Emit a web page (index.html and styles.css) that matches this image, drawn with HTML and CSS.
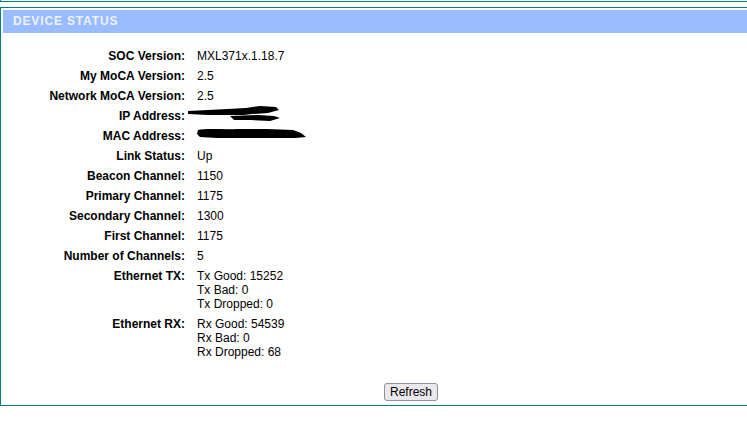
FILE: index.html
```html
<!DOCTYPE html>
<html>
<head>
<meta charset="utf-8">
<title>Device Status</title>
<link rel="stylesheet" href="styles.css">
</head>
<body>
<div class="frame">
<div class="prev-frame"></div>
<div class="panel">
  <div class="panel-title">DEVICE STATUS</div>
  <div class="status">
    <div class="row"><div class="label">SOC Version:</div><div class="value">MXL371x.1.18.7</div></div>
    <div class="row"><div class="label">My MoCA Version:</div><div class="value">2.5</div></div>
    <div class="row"><div class="label">Network MoCA Version:</div><div class="value">2.5</div></div>
    <div class="row"><div class="label">IP Address:</div><div class="value redacted">
      <svg class="scrub scrub-ip" width="96" height="16" viewBox="0 0 96 16">
        <path d="M0 5 C20 4 40 3 58 2 L72 0 L88 1 L91 4 L80 7 L64 8 L56 9 L40 9 L20 9 L0 8 Z" fill="#000"/>
        <path d="M42 10 L70 9 L86 10 L92 12 L82 15 L62 14 L46 14 Z" fill="#000"/>
      </svg>
    </div></div>
    <div class="row"><div class="label">MAC Address:</div><div class="value redacted">
      <svg class="scrub scrub-mac" width="112" height="12" viewBox="0 0 112 12">
        <path d="M1 2 C10 0 28 2 40 1 L70 1 L96 2 L104 5 L109 9 L98 10 L70 10 L40 10 L20 10 L3 9 L0 6 Z" fill="#000"/>
      </svg>
    </div></div>
    <div class="row"><div class="label">Link Status:</div><div class="value">Up</div></div>
    <div class="row"><div class="label">Beacon Channel:</div><div class="value">1150</div></div>
    <div class="row"><div class="label">Primary Channel:</div><div class="value">1175</div></div>
    <div class="row"><div class="label">Secondary Channel:</div><div class="value">1300</div></div>
    <div class="row"><div class="label">First Channel:</div><div class="value">1175</div></div>
    <div class="row"><div class="label">Number of Channels:</div><div class="value">5</div></div>
    <div class="row"><div class="label">Ethernet TX:</div><div class="value">Tx Good: 15252<br>Tx Bad: 0<br>Tx Dropped: 0</div></div>
    <div class="row"><div class="label">Ethernet RX:</div><div class="value">Rx Good: 54539<br>Rx Bad: 0<br>Rx Dropped: 68</div></div>
  </div>
  <div class="actions"><button class="btn" type="button">Refresh</button></div>
</div>
</div>
</body>
</html>
```
FILE: styles.css
```css
html, body {
  margin: 0;
  padding: 0;
  background: #fff;
  overflow: hidden;
  font-family: "Liberation Sans", Arial, sans-serif;
  font-size: 12px;
  color: #000;
}

/* the page sits in a frame wider than the window; clip what runs off */
.frame {
  width: 100vw;
  overflow: hidden;
}

.prev-frame {
  width: 820px;
  height: 1px;
  border-top: 1px solid #d4d4d4;
  border-left: 1px solid #008080;
  border-bottom: 1px solid #008080;
  margin-top: -1px;
}

.panel {
  width: 816px;
  margin-top: 5px;
  border: 1px solid #008080;
  padding: 2px 0 0 2px;
}

.panel-title {
  height: 23px;
  line-height: 23px;
  background: #99bbff;
  color: #eef2ff;
  font-weight: bold;
  font-size: 12px;
  letter-spacing: 0.85px;
  padding-left: 10px;
}

.status {
  display: grid;
  grid-template-columns: 182px auto;
  padding-top: 16px;
  row-gap: 6px;
}

.row {
  display: contents;
}

.label {
  font-weight: bold;
  text-align: right;
  line-height: 14px;
}

.value {
  padding-left: 12px;
  line-height: 14px;
}

.redacted {
  position: relative;
}

.scrub {
  position: absolute;
  display: block;
}

.scrub-ip {
  left: 3px;
  top: -3px;
}

.scrub-mac {
  left: 12px;
  top: -1px;
}

.actions {
  display: flex;
  justify-content: center;
  padding: 24px 0 4px;
}

.btn {
  font-family: "Liberation Sans", Arial, sans-serif;
  font-size: 12px;
  color: #000;
  background: #e9e9ed;
  border: 1px solid #8f8f9d;
  border-radius: 3px;
  padding: 1px 5px;
  height: 18px;
  line-height: 14px;
}
```
